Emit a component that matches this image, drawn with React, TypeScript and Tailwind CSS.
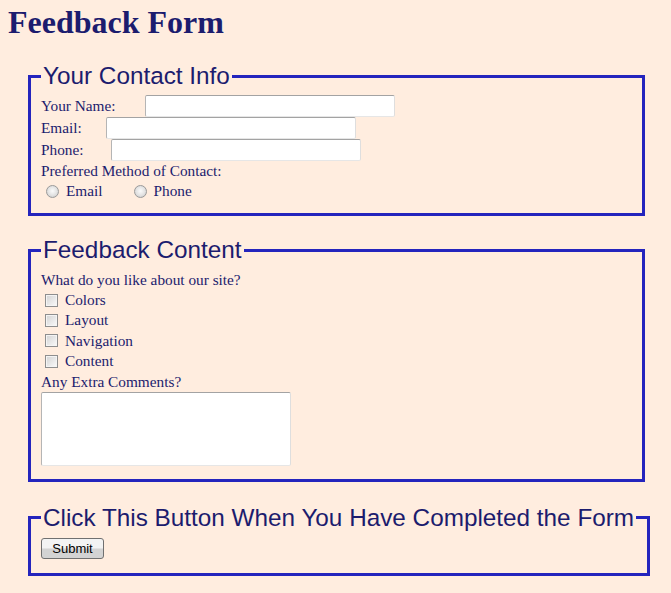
const serif = "font-['Liberation_Serif','Times_New_Roman',serif]";
const sans = "font-['Liberation_Sans',Arial,sans-serif]";

const fieldsetCls =
  "ml-[20px] mr-[18px] border-[3px] border-solid border-[#2424bd] pl-[10px] pr-[11px] min-w-min";
const legendCls = `${sans} whitespace-nowrap px-[2px] text-[24.3px] leading-[28px] text-[#1c1c6e]`;
const inputCls =
  "block h-[22px] w-[250px] rounded-[2px] border border-t-[#a3a3a3] border-l-[#b5b5b5] border-r-[#dedede] border-b-[#e6e6e6] bg-white";

function Radio({ label }: { label: string }) {
  return (
    <label className="flex items-center">
      <input
        type="radio"
        name="contact"
        className="ml-[5px] mr-[7px] h-[13px] w-[13px] appearance-none rounded-full border border-[#9a9a9a] bg-[radial-gradient(circle_at_50%_45%,#fbfbfb_0%,#e2e2e2_55%,#c4c4c4_100%)]"
      />
      {label}
    </label>
  );
}

function Check({ label }: { label: string }) {
  return (
    <label className="flex h-[20.4px] items-center">
      <input
        type="checkbox"
        className="ml-[4px] mr-[7px] h-[13px] w-[13px] appearance-none border border-[#8e8e8e] bg-linear-to-br from-[#d2d2d2] to-[#fbfbfb] shadow-[inset_0_0_0_1px_#f4f4f4]"
      />
      {label}
    </label>
  );
}

export default function App() {
  return (
    <div className={`${serif} min-h-screen bg-[#ffeddf] px-[8px] pt-[6px] pb-[16px] text-[15.3px] text-[#1c1c6e]`}>
      <h1 className="text-[32px] font-bold leading-[32px]">Feedback Form</h1>

      <form>
        <fieldset className={`${fieldsetCls} mt-[24px] pt-[5px] pb-[12px]`}>
          <legend className={legendCls}>Your Contact Info</legend>
          <div className="flex h-[22px] items-center">
            <span className="w-[104px]">Your Name:</span>
            <input type="text" className={inputCls} />
          </div>
          <div className="flex h-[22px] items-center">
            <span className="w-[65px]">Email:</span>
            <input type="text" className={inputCls} />
          </div>
          <div className="flex h-[22px] items-center">
            <span className="w-[70px]">Phone:</span>
            <input type="text" className={inputCls} />
          </div>
          <p className="leading-[20px]">Preferred Method of Contact:</p>
          <div className="flex h-[20px] items-center gap-[26px]">
            <Radio label="Email" />
            <Radio label="Phone" />
          </div>
        </fieldset>

        <fieldset className={`${fieldsetCls} mt-[20px] pt-[6px] pb-[13px]`}>
          <legend className={legendCls}>Feedback Content</legend>
          <p className="leading-[20px]">What do you like about our site?</p>
          <Check label="Colors" />
          <Check label="Layout" />
          <Check label="Navigation" />
          <Check label="Content" />
          <p className="leading-[20px]">Any Extra Comments?</p>
          <textarea className="block h-[74px] w-[250px] resize-none rounded-[2px] border border-t-[#a3a3a3] border-l-[#b5b5b5] border-r-[#dedede] border-b-[#e6e6e6] bg-white" />
        </fieldset>

        <fieldset className={`${fieldsetCls} mt-[22px] pt-[6px] pb-[14px]`}>
          <legend className={legendCls}>Click This Button When You Have Completed the Form</legend>
          <button
            type="button"
            className={`${sans} block h-[21px] w-[63px] rounded-[3px] border border-[#707070] bg-linear-to-b from-[#f3f3f3] from-45% to-[#d3d3d3] to-55% text-[13px] leading-[19px] text-black`}
          >
            Submit
          </button>
        </fieldset>
      </form>
    </div>
  );
}
